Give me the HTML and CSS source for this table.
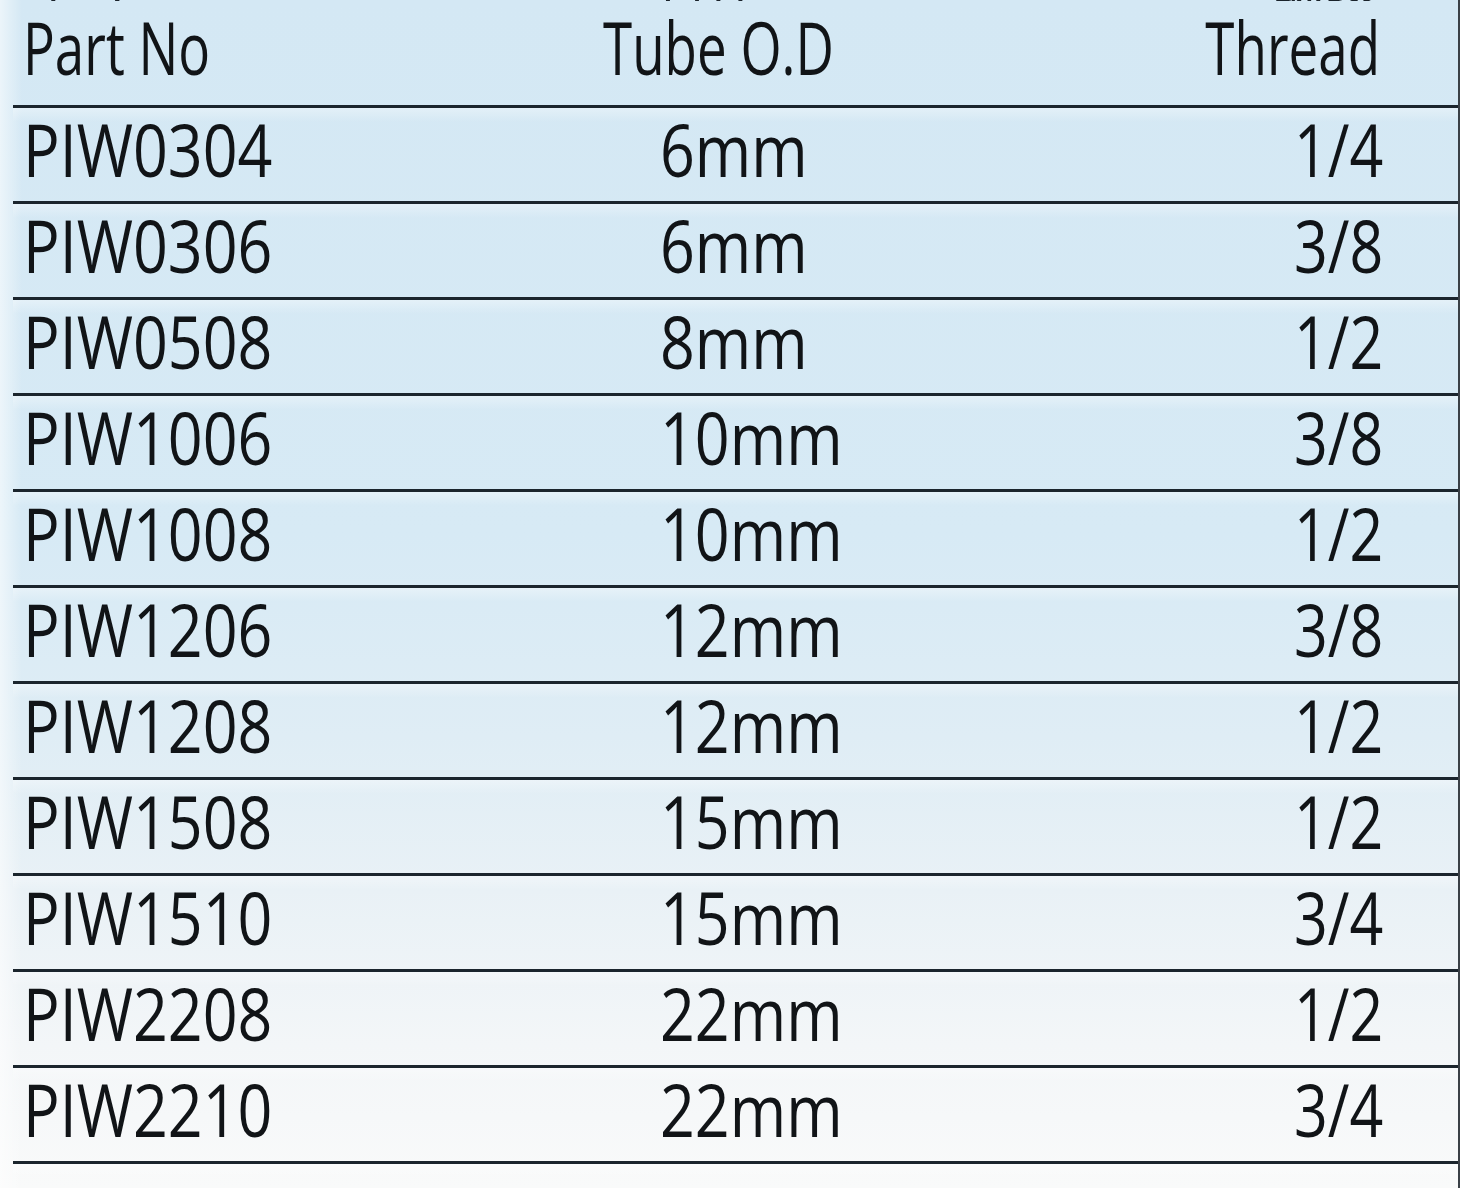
FILE: index.html
```html
<!DOCTYPE html>
<html lang="en">
<head>
<meta charset="utf-8">
<title>Part table</title>
<link rel="stylesheet" href="styles.css">
</head>
<body>
<div class="sheet">
  <div class="table">
    <div class="row head">
      <div class="cell c1"><span class="cn">型号</span><span class="t">Part No</span></div>
      <div class="cell c2"><span class="cn">管径</span><span class="t">Tube O.D</span></div>
      <div class="cell c3"><span class="cn">螺纹</span><span class="t">Thread</span></div>
    </div>
    <div class="row"><div class="cell c1"><span class="t">PIW0304</span></div><div class="cell c2"><span class="t">6mm</span></div><div class="cell c3"><span class="t">1/4</span></div></div>
    <div class="row"><div class="cell c1"><span class="t">PIW0306</span></div><div class="cell c2"><span class="t">6mm</span></div><div class="cell c3"><span class="t">3/8</span></div></div>
    <div class="row"><div class="cell c1"><span class="t">PIW0508</span></div><div class="cell c2"><span class="t">8mm</span></div><div class="cell c3"><span class="t">1/2</span></div></div>
    <div class="row"><div class="cell c1"><span class="t">PIW1006</span></div><div class="cell c2"><span class="t">10mm</span></div><div class="cell c3"><span class="t">3/8</span></div></div>
    <div class="row"><div class="cell c1"><span class="t">PIW1008</span></div><div class="cell c2"><span class="t">10mm</span></div><div class="cell c3"><span class="t">1/2</span></div></div>
    <div class="row"><div class="cell c1"><span class="t">PIW1206</span></div><div class="cell c2"><span class="t">12mm</span></div><div class="cell c3"><span class="t">3/8</span></div></div>
    <div class="row"><div class="cell c1"><span class="t">PIW1208</span></div><div class="cell c2"><span class="t">12mm</span></div><div class="cell c3"><span class="t">1/2</span></div></div>
    <div class="row"><div class="cell c1"><span class="t">PIW1508</span></div><div class="cell c2"><span class="t">15mm</span></div><div class="cell c3"><span class="t">1/2</span></div></div>
    <div class="row"><div class="cell c1"><span class="t">PIW1510</span></div><div class="cell c2"><span class="t">15mm</span></div><div class="cell c3"><span class="t">3/4</span></div></div>
    <div class="row"><div class="cell c1"><span class="t">PIW2208</span></div><div class="cell c2"><span class="t">22mm</span></div><div class="cell c3"><span class="t">1/2</span></div></div>
    <div class="row"><div class="cell c1"><span class="t">PIW2210</span></div><div class="cell c2"><span class="t">22mm</span></div><div class="cell c3"><span class="t">3/4</span></div></div>
    <div class="row tail"></div>
  </div>
</div>
</body>
</html>
```
FILE: styles.css
```css
html, body {
  margin: 0;
  padding: 0;
  background: #ffffff;
}
body {
  width: 1480px;
  height: 1188px;
  overflow: hidden;
  font-family: "Open Sans", "Noto Sans", "Noto Sans CJK SC", sans-serif;
  color: #111417;
}
.sheet {
  width: 1460px;
  height: 1188px;
  box-sizing: border-box;
  border-right: 2px solid #3a4046;
  background:
    linear-gradient(to right, rgba(255,255,255,0.55) 0px, rgba(255,255,255,0) 22px),
    linear-gradient(to bottom, #d4e8f4 0%, #d7eaf5 45%, #dfedf5 62%, #e9f1f6 75%, #f3f6f8 88%, #f9fafa 100%);
  overflow: hidden;
}
.table {
  margin-left: 13px;
}
.row {
  display: grid;
  grid-template-columns: 580px 540px 250px;
  height: 93px;
  border-bottom: 3px solid #1b252d;
  box-sizing: content-box;
  font-size: 73px;
  line-height: 73px;
  background: linear-gradient(to bottom, rgba(255,255,255,0.35) 0px, rgba(255,255,255,0) 14px);
}
.row.head {
  height: 105px;
  background: none;
  overflow: hidden;
}
.row.tail {
  border-bottom: none;
}
.cell {
  display: flex;
  flex-direction: column;
  padding-top: 4px;
}
.head .cell {
  padding-top: 0;
}
.c1 {
  padding-left: 10px;
  align-items: flex-start;
}
.c2 {
  padding-left: 67px;
  align-items: flex-start;
}
.head .c2 {
  padding-left: 10px;
}
.c3 {
  align-items: flex-end;
}
.head .c3 {
  padding-right: 3px;
}
.t {
  display: inline-block;
  white-space: nowrap;
  transform: scaleX(0.835);
  transform-origin: left center;
}
.c3 .t {
  transform: scaleX(0.81);
  transform-origin: right center;
}
.head .t {
  transform: scaleX(0.725);
}
.head .c3 .t {
  transform: scaleX(0.725);
}
.cn {
  display: block;
  font-family: "Noto Sans CJK SC", sans-serif;
  font-size: 52px;
  line-height: 40px;
  height: 40px;
  margin-top: -39px;
  margin-bottom: 9px;
  color: #1a232b;
  white-space: nowrap;
  overflow: hidden;
}
.c1 .cn { padding-left: 4px; }
.c2 .cn { padding-left: 52px; }
.c3 .cn { padding-right: 2px; }
```
